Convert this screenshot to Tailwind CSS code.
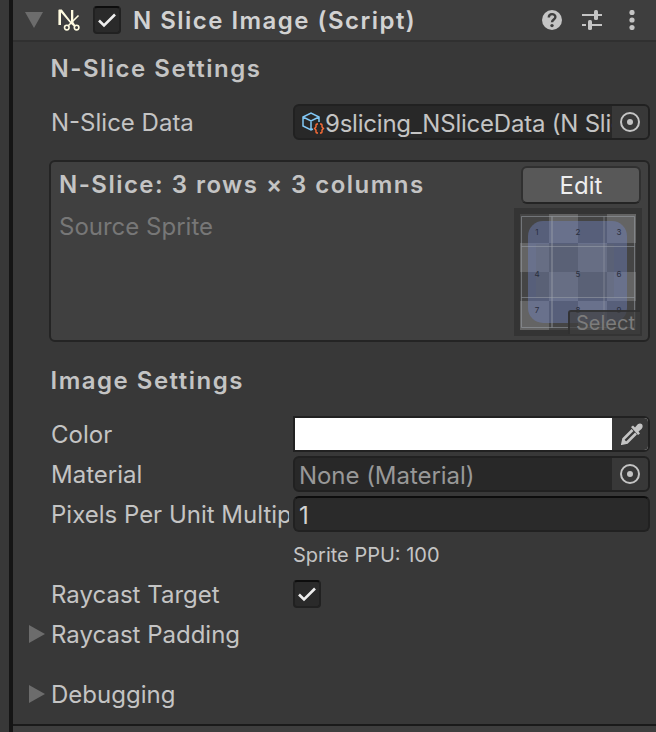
<!DOCTYPE html>
<html lang="en">
<head>
<meta charset="utf-8">
<title>Inspector</title>
<script src="https://cdn.jsdelivr.net/npm/@tailwindcss/browser@4"></script>
</head>
<body class="w-[656px] h-[732px] overflow-hidden flex bg-[#383838] text-[#c4c4c4] font-['Inter','Liberation_Sans',sans-serif] text-[24px] leading-[36px] whitespace-nowrap">
<div class="w-[13px] shrink-0 border-r-4 border-[#151515] bg-[#383838]"></div>
<main class="w-[643px] shrink-0">
  <header class="h-[42px] bg-[#3e3e3e] border-b-2 border-[#303030] flex items-center">
    <svg class="ml-3 w-[18px] h-4" viewBox="0 0 18 16"><path d="M0 0h18L9 16z" fill="#6c6c6c"/></svg>
    <svg class="ml-[15px] w-[22px] h-[22px]" viewBox="0 0 22 22" fill="none" stroke="#fffbe0">
      <path d="M1.700 16V1" stroke-width="2.600"/><path d="M0.500 0.500h3.300L13 12.500V1h2.300V13L17.500 16.500L16 17.500L12.500 14.500z" fill="#fffbe0" stroke="none"/><path d="M20.500 6.500L10 17" stroke-width="1.600"/><circle cx="8.800" cy="18.600" r="2.300" stroke-width="1.600"/><circle cx="18.600" cy="18.600" r="2.300" stroke-width="1.600"/>
    </svg>
    <div class="ml-[13px] w-7 h-7 rounded-[4px] bg-[#2a2a2a] border-2 border-[#212121] border-t-[#0d0d0d]">
      <svg class="w-6 h-6" viewBox="0 0 24 24"><path d="M4 12.500l5 5L20 6.500" fill="none" stroke="#eee" stroke-width="2.600"/></svg>
    </div>
    <h1 class="ml-3 w-[405px] pt-px font-semibold text-[#d2d2d2] tracking-[1.47px]">N Slice Image (Script)</h1>
    <svg class="w-5 h-5 ml-[4px]" viewBox="0 0 20 20"><circle cx="10" cy="10" r="10" fill="#c4c4c4"/><path d="M6.800 7.500C6.800 3 13.400 3.200 13.400 7c0 2.500-3.400 2.500-3.400 5.300" fill="none" stroke="#3e3e3e" stroke-width="2.400"/><circle cx="10" cy="15.600" r="1.700" fill="#3e3e3e"/></svg>
    <svg class="w-5 h-5 ml-5" viewBox="0 0 20 20" fill="#c4c4c4"><path d="M0 4h12v2H0zM16 4h4v2h-4zM0 14h4v2H0zM8 14h12v2H8z"/><rect x="12" y="0" width="4" height="10" rx="1.500"/><rect x="6" y="10" width="4" height="10" rx="1.500"/></svg>
    <svg class="w-[6px] h-5 ml-[27px]" viewBox="0 0 6 20" fill="#c4c4c4"><circle cx="3" cy="2.500" r="2.600"/><circle cx="3" cy="10" r="2.600"/><circle cx="3" cy="17.500" r="2.600"/></svg>
  </header>
  <h2 class="h-[54px] leading-[54px] pl-[37.5px] font-semibold tracking-[1.5px]">N-Slice Settings</h2>
  <div class="mt-2 h-9 pl-[38px] flex">
    <div class="w-[242px] leading-[37px]">N-Slice Data</div>
    <div class="w-[357px] h-9 flex rounded-[6px] border-2 border-[#212121] bg-[#282828] overflow-hidden">
      <svg class="w-6 h-6 ml-1.5 mt-[5px] shrink-0" viewBox="0 0 24 24" fill="none"><path d="M12 18L10 19L2 15V6L10 2L18 6V11M2 6L10 10L18 6M10 10V19" stroke="#81c7f5" stroke-width="1.500"/><path d="M17 13H16Q15 13 15 14V16L13.500 17.500L15 19V21Q15 22 16 22H17M19 13H20Q21 13 21 14V16L22.500 17.500L21 19V21Q21 22 20 22H19" stroke="#ff6d37" stroke-width="1.400"/></svg>
      <div class="w-[287px] shrink-0 overflow-hidden leading-[35px] tracking-[-0.22px]">9slicing_NSliceData (N Slice Data)</div>
      <div class="grow bg-[#383838] flex items-center justify-center"><svg class="w-5 h-5" viewBox="0 0 20 20"><circle cx="10" cy="10" r="9" fill="none" stroke="#c4c4c4" stroke-width="2"/><circle cx="10" cy="10" r="3" fill="#c4c4c4"/></svg></div>
    </div>
  </div>
  <section class="ml-9 mt-5 w-[601px] h-[182px] rounded-[6px] border-2 border-[#242424] bg-[#404040] flex justify-between">
    <div class="pl-2 pt-[5px]">
      <h3 class="font-semibold tracking-[1.47px]">N-Slice: 3 rows × 3 columns</h3>
      <div class="mt-1.5 text-[#777]">Source Sprite</div>
    </div>
    <div class="w-[134px] pt-1">
      <button class="block ml-[7px] w-[120px] h-[38px] rounded-[6px] bg-[#585858] border-2 border-[#303030] border-b-[#242424] text-[#eee] leading-[35px]">Edit</button>
      <div class="relative mt-1 w-32 h-32 bg-[#343434]">
        <svg class="w-32 h-32" viewBox="0 0 128 128">
          <rect x="6" y="6" width="116" height="116" fill="#454545"/>
          <path fill="#646464" d="M35 6h29v29H35zM93 6h29v29H93zM6 35h29v29H6zM64 35h29v29H64zM35 64h29v29H35zM93 64h29v29H93zM6 93h29v29H6zM64 93h29v29H64z"/>
          <rect x="14" y="13" width="99" height="102" rx="15" fill="#6f84c4" fill-opacity=".42"/>
          <rect x="22" y="36" width="78" height="54" fill="#65676a" fill-opacity=".25"/>
          <path d="M7.500 8.500h113v111H7.500zM7.500 38.500h113M7.500 89.500h113M90 8.500v111" fill="none" stroke="#a0a5ad" stroke-opacity=".5" stroke-width="1"/>
          <path d="M38 8.500v111" stroke="#a0a5ad" stroke-opacity=".5" stroke-width="1.500"/>
          <g fill="#292e3d" font-size="8" text-anchor="middle" font-family="Inter"><text x="23" y="27">1</text><text x="64" y="27">2</text><text x="105" y="27">3</text><text x="23" y="68.500">4</text><text x="64" y="68.500">5</text><text x="105" y="68.500">6</text><text x="23" y="105">7</text><text x="64" y="105">8</text><text x="105" y="105">9</text></g>
        </svg>
        <div class="absolute left-[54px] top-[102px] w-[72px] h-6 bg-[#3e3e3e]/70 border-t-2 border-l-2 border-[#303030]/80 rounded-tl-[3px] text-[#7c7c7c] text-[20px] leading-[22px] pl-[6px]">Select</div>
      </div>
    </div>
  </section>
  <h2 class="h-[74px] leading-[78px] pl-[37.5px] font-semibold tracking-[1.5px]">Image Settings</h2>
  <div class="pl-[38px] flex flex-col gap-1">
    <div class="h-9 flex">
      <div class="w-[242px] leading-[37px]">Color</div>
      <div class="w-[357px] flex rounded-r-[6px] border-2 border-[#212121] bg-white overflow-hidden">
        <div class="w-[317px]"></div>
        <div class="grow bg-[#383838]"><svg class="w-[22px] h-[22px] ml-[9px] mt-[5px]" viewBox="0 0 22 22"><path d="M11.500 7L2.500 16L1.500 20.500L6 19.500L15 10.500" fill="none" stroke="#c4c4c4" stroke-width="2.600"/><path d="M1 21l1-5.500 5 4.500z" fill="#c4c4c4"/><path d="M10 4l2-1.500L14 4.500l2.500-3Q19-.5 21 1.200 22.500 3.500 20.500 6L17.500 8.500L19 10.500L17 12z" fill="#c4c4c4"/></svg></div>
      </div>
    </div>
    <div class="h-9 flex">
      <div class="w-[242px] leading-[37px]">Material</div>
      <div class="w-[357px] flex rounded-[6px] border-2 border-[#212121] bg-[#282828] overflow-hidden">
        <div class="w-[317px] pl-1 leading-[35px] text-[#989898] tracking-[-0.05px]">None (Material)</div>
        <div class="grow bg-[#383838] flex items-center justify-center"><svg class="w-5 h-5" viewBox="0 0 20 20"><circle cx="10" cy="10" r="9" fill="none" stroke="#c4c4c4" stroke-width="2"/><circle cx="10" cy="10" r="3" fill="#c4c4c4"/></svg></div>
      </div>
    </div>
    <div class="h-9 flex">
      <div class="w-[238px] mr-1 overflow-hidden leading-[37px]">Pixels Per Unit Multiplier</div>
      <div class="w-[357px] rounded-[6px] border-2 border-[#212121] border-t-[#0d0d0d] bg-[#2a2a2a] pl-1 leading-[35px] text-[#d2d2d2]">1</div>
    </div>
    <div class="h-9 pl-[242px] text-[20px] leading-[38px]">Sprite PPU: 100</div>
    <div class="h-9 flex">
      <div class="w-[242px] leading-[37px]">Raycast Target</div>
      <div class="mt-1 w-7 h-7 rounded-[4px] bg-[#2a2a2a] border-2 border-[#212121] border-t-[#0d0d0d]">
        <svg class="w-6 h-6" viewBox="0 0 24 24"><path d="M4 12.500l5 5L20 6.500" fill="none" stroke="#eee" stroke-width="2.600"/></svg>
      </div>
    </div>
    <div class="h-9 leading-[37px] flex items-center -ml-[22px]"><svg class="w-4 h-[18px] mr-[6px]" viewBox="0 0 16 18"><path d="M0 0v18l16-9z" fill="#6c6c6c"/></svg>Raycast Padding</div>
    <div class="mt-5 h-9 leading-[37px] flex items-center -ml-[22px]"><svg class="w-4 h-[18px] mr-[6px]" viewBox="0 0 16 18"><path d="M0 0v18l16-9z" fill="#6c6c6c"/></svg>Debugging</div>
  </div>
  <div class="mt-3 h-2 border-t-2 border-[#1a1a1a] bg-[#3e3e3e]"></div>
</main>
</body>
</html>
